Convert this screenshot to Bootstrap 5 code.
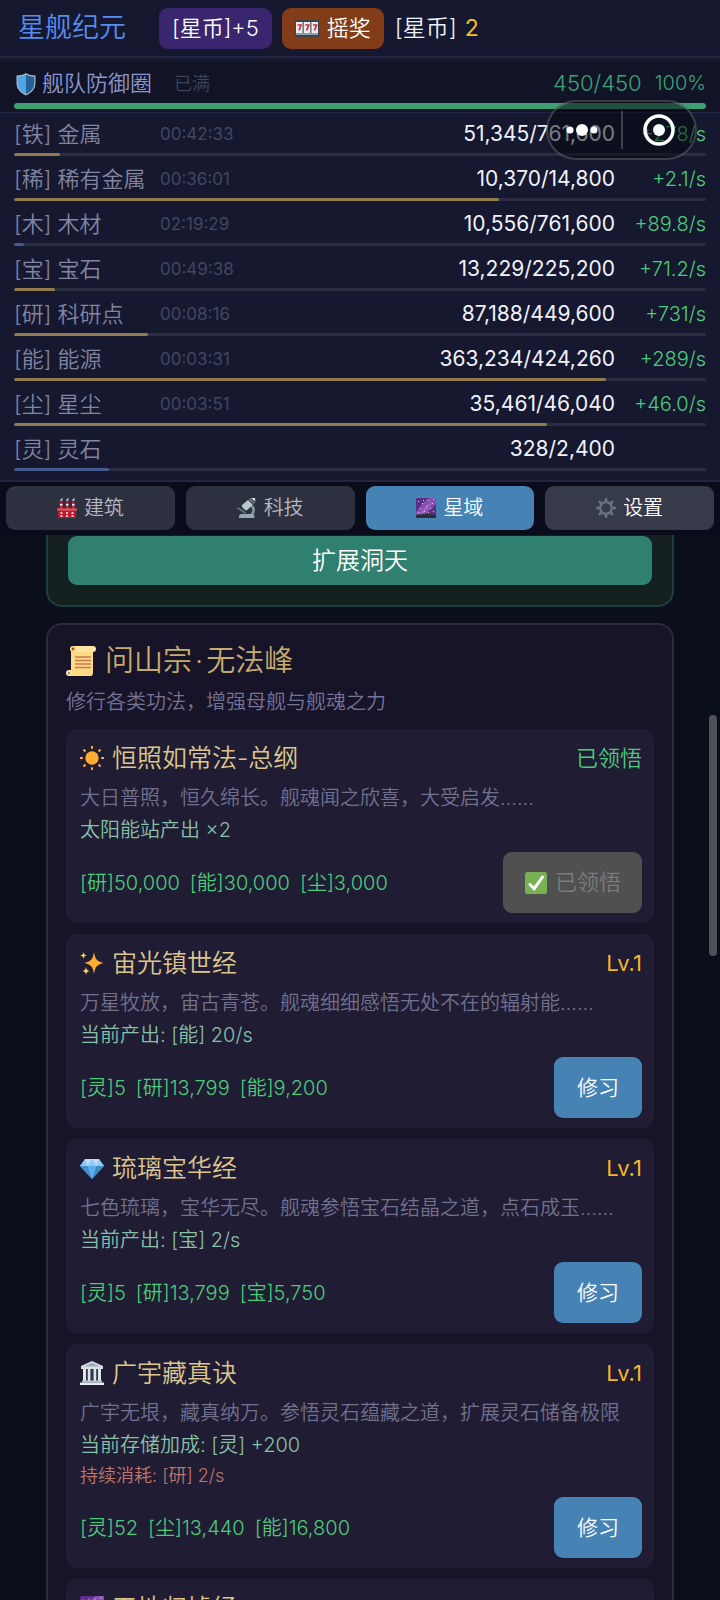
<!DOCTYPE html>
<html lang="zh-CN">
<head>
<meta charset="utf-8">
<meta name="viewport" content="width=device-width, initial-scale=1">
<title>星舰纪元</title>
<link href="https://cdn.jsdelivr.net/npm/bootstrap@5.3.0/dist/css/bootstrap.min.css" rel="stylesheet">
<style>
  body { font-family: Inter, "Noto Sans CJK SC", sans-serif; font-size: 20px; line-height: 32px; font-weight: 350; color: #f1f2fb; background: #0b0e1b; }
  .app { height: 100vh; }
  .btn { --bs-btn-font-weight: 350; --bs-btn-border-width: 0px; --bs-btn-color: #fff; --bs-btn-border-radius: 9px; }
  .ico { width: 24px; height: 24px; flex: none; }
  .ico-sm { width: 20px; height: 20px; flex: none; }
  .ico-lg { width: 30px; height: 30px; flex: none; }

  .topbar { height: 58px; padding: 0 18px; background: #15182f; border-bottom: 2px solid #232744; }
  .brand { font-size: 27px; color: #568cf0; margin-right: 33px; }
  .top-btn { font-size: 22px; line-height: 29px; padding: 6px 13px; }
  .coin-btn { --bs-btn-bg: #3a256f; }
  .draw-btn { --bs-btn-bg: #823c17; margin: 0 11px 0 10px; }
  .coins { font-size: 23px; }
  .coins b { font-weight: 400; color: #f9bd2c; margin-left: 8px; }

  .defense { height: 55px; padding: 6px 14px 0; background: #101426; border-top: 4px solid #15182f; border-bottom: 1px solid #212744; }
  .defense .line { height: 31px; line-height: 31px; margin-bottom: 4px; font-size: 22px; color: #8d97cd; }
  .muted-note { font-size: 18px; color: #3f435b; margin-left: 22px; }
  .hp { color: #40a077; }
  .hp-pct { font-size: 20px; color: #40a077; margin-left: 13px; }
  .progress { --bs-progress-bg: #2b2e43; --bs-progress-height: 3px; --bs-progress-border-radius: 2px; --bs-progress-bar-bg: #927c4c; }
  .progress .progress-bar { border-radius: 2px; }
  .progress.low { --bs-progress-bar-bg: #475a8f; }
  .progress.hp-bar { --bs-progress-height: 6px; --bs-progress-border-radius: 3px; --bs-progress-bar-bg: #3d9f72; }

  .resources { background: #15182f; padding: 6px 14px 9px; border-bottom: 2px solid #232541; }
  .res-line { height: 30px; line-height: 30px; margin-bottom: 4px; font-size: 22px; color: #8285a2; }
  .res + .res { padding-top: 8px; }
  .res-name { width: 146px; white-space: nowrap; }
  .res-time { font-size: 17px; font-weight: 400; color: #42465f; }
  .res-val { color: #f0f1fc; font-size: 21px; font-weight: 400; }
  .res-rate { width: 91px; font-size: 20px; color: #4ccc7b; text-align: right; }

  .tabs { padding: 4px 6px 5px; gap: 11px; background: #0a0c1b; }
  .tab-btn { --bs-btn-bg: #2d303f; --bs-btn-color: #b6b8c2; font-size: 20px; line-height: 30px; padding: 7px; gap: 7px; }
  .tab-btn.on { --bs-btn-bg: #4682b4; --bs-btn-active-bg: #4682b4; --bs-btn-color: #fff; }
  .tab-btn.last { --bs-btn-bg: #373a49; --bs-btn-color: #fff; }

  .scroller { padding: 0 46px; min-height: 0; }
  .cave { background: #14201f; border: 2px solid #1e3f42; border-top: 0; border-radius: 0 0 16px 16px; padding: 1px 20px 20px; margin-bottom: 16px; }
  .expand-btn { --bs-btn-bg: #2f806e; font-size: 24px; line-height: 37px; padding: 6px; }
  .sect { background: #171329; border: 2px solid #2f2a38; border-radius: 16px; padding: 17px 18px; }
  .sect h1 { font-size: 29px; line-height: 38px; font-weight: 350; color: #c6ac6c; margin: 0; gap: 9px; }
  .sect h1 .dot { margin: 0 3px; }
  .sect-sub { color: #747596; margin: 6px 0 11px; }
  .skill { background: #201c33; border-radius: 11px; padding: 12px 12px 10px 14px; }
  .skill + .skill { margin-top: 11px; }
  .skill h2 { font-size: 25px; line-height: 34px; font-weight: 350; color: #dcc68d; margin: 0; gap: 8px; }
  .lv { font-size: 22px; font-weight: 400; color: #f5b62c; }
  .done { font-size: 22px; color: #4ccc7b; }
  .desc { color: #70718f; margin: 7px 0 0; white-space: nowrap; }
  .effect { color: #86c2a9; margin: 0; }
  .drain { font-size: 18px; line-height: 30px; color: #c0766c; margin: 0; }
  .cost { gap: 10px; color: #4acc79; }
  .skill-foot { margin-top: 6px; }
  .learn-btn { --bs-btn-bg: #4682b4; font-size: 21px; line-height: 31px; padding: 15px 23px; }
  .learnt-btn { --bs-btn-disabled-bg: #505050; --bs-btn-disabled-color: #7c7c7c; --bs-btn-disabled-opacity: 1; font-size: 22px; line-height: 31px; padding: 15px 21px; gap: 7px; }

  .capsule { top: 100px; right: 23px; width: 151px; height: 60px; border: 2px solid rgba(255,255,255,.2); border-radius: 30px; background: rgba(4,5,12,.5); }
  .capsule .btn { --bs-btn-border-radius: 30px; }
  .capsule .rule { width: 2px; height: 38px; background: rgba(255,255,255,.2); }
  .thumb { top: 715px; right: 3px; width: 8px; height: 241px; border-radius: 4px; background: #505157; }
</style>
</head>
<body>
<svg class="d-none" xmlns="http://www.w3.org/2000/svg">
  <symbol id="i-slots" viewBox="0 0 24 24"><rect y="4" width="24" height="17" rx="1" fill="#39444b"/><path d="M1 6h6.600v12H1zM8.700 6h6.600v12H8.700zM16.400 6H23v12h-6.600z" fill="#e9edf2"/><path d="M2.500 9h3.500L4 14.500M10.200 9h3.500l-2 5.500M18 9h3.500l-2 5.500" fill="none" stroke="#d42a3c" stroke-width="1.700"/><path d="M1 17h22v2H1z" fill="#8fa0ad"/></symbol>
  <symbol id="i-shield" viewBox="0 0 24 24"><path d="M12 1c3 1.800 6 2.500 9.500 2.500V11c0 6-4 10-9.500 12.500C6.500 21 2.500 17 2.500 11V3.500C6 3.500 9 2.800 12 1z" fill="#a9bbc8"/><path d="M12 2.400c2.600 1.400 5 2.100 8.300 2.300V11c0 5.300-3.300 8.800-8.300 11.200z" fill="#266394"/><path d="M12 2.400C9.400 3.800 7 4.500 3.700 4.700V11c0 5.300 3.300 8.800 8.300 11.200z" fill="#50a5e6"/></symbol>
  <symbol id="i-factory" viewBox="0 0 20 20"><path d="M3 4h2.500v7H3zM9 4h2.500v7H9zM15 4h2.500v7H15z" fill="#d9223b"/><path d="M4 1l2-1-1 3h-2zM10 1l2-1-1 3H9zM16 1l2-1-1 3h-2z" fill="#c7d1d8"/><path d="M3 6h2.500v1.500H3zM9 6h2.500v1.500H9zM15 6h2.500v1.500H15z" fill="#eef"/><path d="M1 12h18v8H1z" fill="#bd1931"/><path d="M0 10.500h20v2H0z" fill="#df5b58"/><path d="M3.500 14h2v2h-2zM9 14h2v2H9zM14.500 14h2v2h-2zM3.500 17h2v2h-2zM9 17h2v2H9zM14.500 17h2v2h-2z" fill="#efc4d1"/></symbol>
  <symbol id="i-scope" viewBox="0 0 20 20"><path d="M5 7l6-5 5 5-6 5c-1 1-2 0-3-1S4 8 5 7z" fill="#bbc7d0"/><path d="M11.500 1.500l2-1.500 4.500 4.500-1.500 2z" fill="#62717b"/><path d="M14 0l4-.2.500 4z" fill="#dbe3e8"/><path d="M15 8c3 4 1.500 9-3 10" fill="none" stroke="#8899a6" stroke-width="2.600"/><path d="M2 18.500C2 16.500 4 16 6 16h9c1.500 0 2.500 1 2.500 3v1H2z" fill="#97a8b4"/><path d="M1 9l8 5.500-.8 1.400L.3 10.500z" fill="#66757f"/></symbol>
  <symbol id="i-galaxy" viewBox="0 0 20 20"><rect width="20" height="20" rx="1" fill="#5d2f8b"/><path d="M0 14L8 4l5-4h7v6L9 17H0z" fill="#8550b2"/><path d="M3 16L11 7l6-4-6 9-6 5z" fill="#a565c9"/><path d="M2 3h1v1H2zM6 5h1v1H6zM12 2h1v1h-1zM16 5h1v1h-1zM10 8h1v1h-1zM14 10h1v1h-1zM17 13h1v1h-1zM4 10h1v1H4zM8 13h1v1H8zM12 14h1v1h-1zM7 2h1v1H7zM2 14h1v1H2zM17 1h1v1h-1z" fill="#e5c3f4"/><path d="M0 17c5-1.500 14-1.500 20 0v2c0 .600-.400 1-1 1H1c-.600 0-1-.400-1-1z" fill="#292f37"/></symbol>
  <symbol id="i-gear" viewBox="0 0 20 20"><circle cx="10" cy="10" r="5.800" fill="none" stroke="#66757f" stroke-width="2.200"/><path d="M8.300 3.500L9 0h2l.7 3.500zM8.300 16.500L9 20h2l.7-3.500zM3.500 8.300L0 9v2l3.500.7zM16.500 8.300L20 9v2l-3.500.7zM4.200 6.400L2.200 3.600l1.400-1.400 2.800 2zM13.600 4.200l2.800-2 1.400 1.400-2 2.800zM4.200 13.600l-2 2.800 1.400 1.400 2.800-2zM15.800 13.600l2 2.800-1.400 1.400-2.800-2z" fill="#66757f"/></symbol>
  <symbol id="i-scroll" viewBox="0 0 30 30"><path d="M6 3h21v24H5V5z" fill="#ffd983"/><path d="M7 0h20c2 0 3 1.300 3 3s-1 3-3 3H8z" fill="#ffe3a0"/><circle cx="7" cy="3" r="3" fill="#ffd983"/><circle cx="7" cy="3" r="1.400" fill="#8b5d3c"/><path d="M3 24h22c2.500 0 2.500 6 0 6H3z" fill="#ffd983"/><circle cx="3" cy="27" r="3" fill="#ffe8b6"/><circle cx="3" cy="27" r="1.300" fill="#c28c68"/><path d="M9 11h16M9 14.500h16M9 18h16M9 21.500h16" stroke="#c77a51" stroke-width="1.500"/></symbol>
  <symbol id="i-sun" viewBox="0 0 24 24"><circle cx="12" cy="12" r="6.700" fill="#ffac33"/><path d="M12 0v2.800M12 21.200V24M0 12h2.800M21.200 12H24M3.500 3.500l2 2M18.500 18.500l2 2M3.500 20.500l2-2M18.500 5.500l2-2" stroke="#ffac33" stroke-width="2"/></symbol>
  <symbol id="i-sparkles" viewBox="0 0 24 24"><path d="M14 1c1.300 7.500 2.500 8.800 9.500 11-7 2-8.200 3.500-9.500 11-1.300-7.500-2.500-9-9.500-11C11.500 9.800 12.700 8.500 14 1z" fill="#ffac33"/><path d="M3.500 1c.5 2.400 1 3 3.300 3.500C4.500 5 4 5.600 3.500 8 3 5.600 2.500 5 .2 4.500 2.500 4 3 3.400 3.500 1zM6 16c.6 2.800 1.100 3.400 3.500 4-2.400.6-2.900 1.200-3.500 4-.6-2.800-1.100-3.400-3.500-4 2.400-.6 2.900-1.200 3.500-4z" fill="#ffcf63"/></symbol>
  <symbol id="i-gem" viewBox="0 0 24 24"><path d="M5 3h14l5 7-12 13L0 10z" fill="#5dadec"/><path d="M5 3h14l5 7H0z" fill="#8ccaf7"/><path d="M5 3l2.500 7L12 3l4.500 7L19 3z" fill="#bddcf5"/><path d="M0 10h7.500L12 23z" fill="#478fcc"/><path d="M16.500 10H24L12 23z" fill="#3b88c3"/></symbol>
  <symbol id="i-hall" viewBox="0 0 24 24"><path d="M12 0l11 5v3H1V5z" fill="#d5dee4"/><path d="M12 1.700L20 5.500H4z" fill="#9dadb8"/><path d="M3 8h18v12H3z" fill="#33394b"/><path d="M3 8h3v12H3zM7.800 8h2.600v12H7.800zM13.600 8h2.600v12h-2.600zM18 8h3v12h-3z" fill="#dde6ec"/><path d="M2 19.500h20v2H2z" fill="#b7c5cf"/><path d="M0 21.500h24V24H0z" fill="#e3ebf0"/></symbol>
  <symbol id="i-check" viewBox="0 0 24 24"><rect x="1" y="1" width="22" height="22" rx="2.500" fill="#77b255"/><path d="M6 13.500l4.200 4.200L18.500 6" fill="none" stroke="#fff" stroke-width="3" stroke-linecap="round"/></symbol>
</svg>

<div class="app position-relative d-flex flex-column overflow-hidden">
  <header class="topbar flex-shrink-0 d-flex align-items-center">
    <span class="brand">星舰纪元</span>
    <button type="button" class="btn top-btn coin-btn">[星币]+5</button>
    <button type="button" class="btn top-btn draw-btn d-flex align-items-center gap-2"><svg class="ico"><use href="#i-slots"/></svg>摇奖</button>
    <span class="coins">[星币]<b>2</b></span>
  </header>

  <section class="defense flex-shrink-0">
    <div class="line d-flex align-items-center">
      <svg class="ico me-1"><use href="#i-shield"/></svg><span>舰队防御圈</span>
      <span class="muted-note">已满</span>
      <span class="hp ms-auto">450/450</span><span class="hp-pct">100%</span>
    </div>
    <div class="progress hp-bar" role="progressbar" aria-label="舰队防御圈"><div class="progress-bar" style="width:100%"></div></div>
  </section>

  <section class="resources flex-shrink-0">
    <div class="res"><div class="res-line d-flex"><span class="res-name">[铁] 金属</span><span class="res-time">00:42:33</span><span class="res-val ms-auto">51,345/761,600</span><span class="res-rate">+278/s</span></div><div class="progress"><div class="progress-bar" style="width:6.7%"></div></div></div>
    <div class="res"><div class="res-line d-flex"><span class="res-name">[稀] 稀有金属</span><span class="res-time">00:36:01</span><span class="res-val ms-auto">10,370/14,800</span><span class="res-rate">+2.1/s</span></div><div class="progress"><div class="progress-bar" style="width:70.1%"></div></div></div>
    <div class="res"><div class="res-line d-flex"><span class="res-name">[木] 木材</span><span class="res-time">02:19:29</span><span class="res-val ms-auto">10,556/761,600</span><span class="res-rate">+89.8/s</span></div><div class="progress low"><div class="progress-bar" style="width:1.4%"></div></div></div>
    <div class="res"><div class="res-line d-flex"><span class="res-name">[宝] 宝石</span><span class="res-time">00:49:38</span><span class="res-val ms-auto">13,229/225,200</span><span class="res-rate">+71.2/s</span></div><div class="progress"><div class="progress-bar" style="width:5.9%"></div></div></div>
    <div class="res"><div class="res-line d-flex"><span class="res-name">[研] 科研点</span><span class="res-time">00:08:16</span><span class="res-val ms-auto">87,188/449,600</span><span class="res-rate">+731/s</span></div><div class="progress"><div class="progress-bar" style="width:19.4%"></div></div></div>
    <div class="res"><div class="res-line d-flex"><span class="res-name">[能] 能源</span><span class="res-time">00:03:31</span><span class="res-val ms-auto">363,234/424,260</span><span class="res-rate">+289/s</span></div><div class="progress"><div class="progress-bar" style="width:85.6%"></div></div></div>
    <div class="res"><div class="res-line d-flex"><span class="res-name">[尘] 星尘</span><span class="res-time">00:03:51</span><span class="res-val ms-auto">35,461/46,040</span><span class="res-rate">+46.0/s</span></div><div class="progress"><div class="progress-bar" style="width:77%"></div></div></div>
    <div class="res"><div class="res-line d-flex"><span class="res-name">[灵] 灵石</span><span class="res-val ms-auto">328/2,400</span><span class="res-rate"></span></div><div class="progress low"><div class="progress-bar" style="width:13.7%"></div></div></div>
  </section>

  <nav class="tabs flex-shrink-0 d-flex">
    <button type="button" class="btn tab-btn flex-fill w-100 d-flex align-items-center justify-content-center"><svg class="ico-sm"><use href="#i-factory"/></svg>建筑</button>
    <button type="button" class="btn tab-btn flex-fill w-100 d-flex align-items-center justify-content-center"><svg class="ico-sm"><use href="#i-scope"/></svg>科技</button>
    <button type="button" class="btn tab-btn on flex-fill w-100 d-flex align-items-center justify-content-center"><svg class="ico-sm"><use href="#i-galaxy"/></svg>星域</button>
    <button type="button" class="btn tab-btn last flex-fill w-100 d-flex align-items-center justify-content-center"><svg class="ico-sm"><use href="#i-gear"/></svg>设置</button>
  </nav>

  <main class="scroller flex-grow-1 overflow-hidden">
    <section class="cave"><button type="button" class="btn expand-btn w-100">扩展洞天</button></section>

    <section class="sect">
      <h1 class="d-flex align-items-center"><svg class="ico-lg"><use href="#i-scroll"/></svg><span>问山宗<span class="dot">·</span>无法峰</span></h1>
      <p class="sect-sub">修行各类功法，增强母舰与舰魂之力</p>

      <article class="skill">
        <div class="d-flex justify-content-between align-items-center"><h2 class="d-flex align-items-center"><svg class="ico"><use href="#i-sun"/></svg>恒照如常法-总纲</h2><span class="done">已领悟</span></div>
        <p class="desc">大日普照，恒久绵长。舰魂闻之欣喜，大受启发……</p>
        <p class="effect">太阳能站产出 ×2</p>
        <div class="skill-foot d-flex justify-content-between align-items-center">
          <div class="cost d-flex"><span>[研]50,000</span><span>[能]30,000</span><span>[尘]3,000</span></div>
          <button type="button" class="btn learnt-btn d-flex align-items-center" disabled><svg class="ico"><use href="#i-check"/></svg>已领悟</button>
        </div>
      </article>

      <article class="skill">
        <div class="d-flex justify-content-between align-items-center"><h2 class="d-flex align-items-center"><svg class="ico"><use href="#i-sparkles"/></svg>宙光镇世经</h2><span class="lv">Lv.1</span></div>
        <p class="desc">万星牧放，宙古青苍。舰魂细细感悟无处不在的辐射能……</p>
        <p class="effect">当前产出: [能] 20/s</p>
        <div class="skill-foot d-flex justify-content-between align-items-center">
          <div class="cost d-flex"><span>[灵]5</span><span>[研]13,799</span><span>[能]9,200</span></div>
          <button type="button" class="btn learn-btn">修习</button>
        </div>
      </article>

      <article class="skill">
        <div class="d-flex justify-content-between align-items-center"><h2 class="d-flex align-items-center"><svg class="ico"><use href="#i-gem"/></svg>琉璃宝华经</h2><span class="lv">Lv.1</span></div>
        <p class="desc">七色琉璃，宝华无尽。舰魂参悟宝石结晶之道，点石成玉……</p>
        <p class="effect">当前产出: [宝] 2/s</p>
        <div class="skill-foot d-flex justify-content-between align-items-center">
          <div class="cost d-flex"><span>[灵]5</span><span>[研]13,799</span><span>[宝]5,750</span></div>
          <button type="button" class="btn learn-btn">修习</button>
        </div>
      </article>

      <article class="skill">
        <div class="d-flex justify-content-between align-items-center"><h2 class="d-flex align-items-center"><svg class="ico"><use href="#i-hall"/></svg>广宇藏真诀</h2><span class="lv">Lv.1</span></div>
        <p class="desc">广宇无垠，藏真纳万。参悟灵石蕴藏之道，扩展灵石储备极限</p>
        <p class="effect">当前存储加成: [灵] +200</p>
        <p class="drain">持续消耗: [研] 2/s</p>
        <div class="skill-foot d-flex justify-content-between align-items-center">
          <div class="cost d-flex"><span>[灵]52</span><span>[尘]13,440</span><span>[能]16,800</span></div>
          <button type="button" class="btn learn-btn">修习</button>
        </div>
      </article>

      <article class="skill">
        <h2 class="d-flex align-items-center"><svg class="ico"><use href="#i-galaxy"/></svg>天地归墟经</h2>
      </article>
    </section>
  </main>

  <div class="thumb position-absolute"></div>
  <div class="capsule position-absolute d-flex align-items-center">
    <button type="button" class="btn flex-fill w-50 h-100 p-0 pe-1 d-flex align-items-center justify-content-center" aria-label="更多"><svg width="34" height="14"><circle cx="5" cy="7" r="3.500" fill="#fff"/><circle cx="17" cy="7" r="6" fill="#fff"/><circle cx="29" cy="7" r="3.500" fill="#fff"/></svg></button>
    <span class="rule"></span>
    <button type="button" class="btn flex-fill w-50 h-100 p-0 d-flex align-items-center justify-content-center" aria-label="关闭"><svg width="32" height="32"><circle cx="16" cy="16" r="14" fill="none" stroke="#fff" stroke-width="3.500"/><circle cx="16" cy="16" r="6" fill="#fff"/></svg></button>
  </div>
</div>
<script src="https://cdn.jsdelivr.net/npm/bootstrap@5.3.0/dist/js/bootstrap.bundle.min.js"></script>
</body>
</html>
